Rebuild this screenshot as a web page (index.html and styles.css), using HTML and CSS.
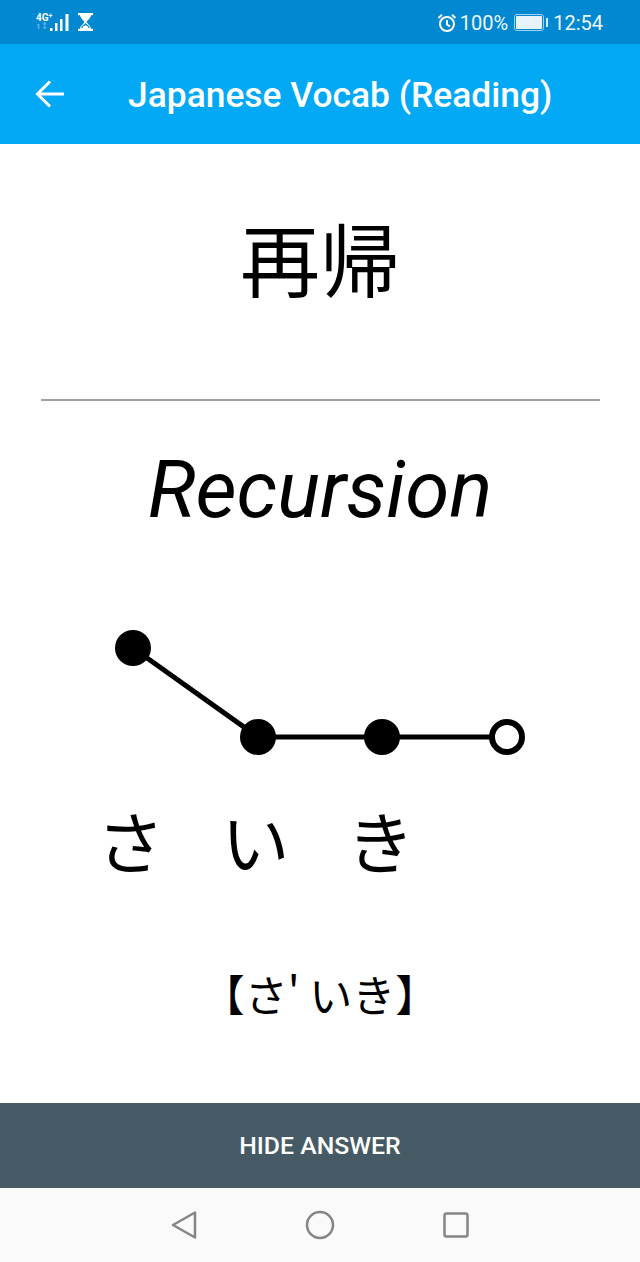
FILE: index.html
```html
<!DOCTYPE html>
<html lang="ja">
<head>
<meta charset="utf-8">
<title>Japanese Vocab (Reading)</title>
<link rel="stylesheet" href="styles.css">
</head>
<body>
<div class="app">
  <div class="status">
    <div class="status-left">
      <div class="net"><span class="net-top">4G<sup>+</sup></span><span class="net-sub">1↕</span></div>
      <svg class="signal" width="19" height="19" viewBox="0 0 19 19"><g fill="#fff"><rect x="0" y="15" width="2.500" height="3"/><rect x="5" y="10" width="2.500" height="8"/><rect x="10" y="6" width="2.500" height="12"/><rect x="15.500" y="1" width="3" height="17"/></g></svg>
      <svg class="hourglass" width="15" height="18" viewBox="0 0 15 18"><g fill="#fff"><rect x="0" y="0" width="15" height="2.200"/><rect x="0" y="15.800" width="15" height="2.200"/><path d="M2 2h11c0 3-3.500 5-4.500 7 1 2 4.500 4 4.500 7H2c0-3 3.500-5 4.500-7C5.500 7 2 5 2 2zM4.500 12.800c-.8.7-1.200 1.300-1.300 1.900h8.600c-.1-.6-.5-1.200-1.300-1.900-1-.9-2-1.800-3-2.800-1 1-2 1.900-3 2.800z" fill-rule="evenodd"/><path d="M5 13.500c1-.7 1.800-1.200 2.500-1.300.7.100 1.500.6 2.500 1.300v1.500H5z"/></g></svg>
    </div>
    <div class="status-right">
      <svg class="alarm" width="20" height="20" viewBox="0 0 20 20" fill="none" stroke="#fff" stroke-width="2"><circle cx="10" cy="11" r="7"/><path d="M10 7v4.500l3 2M1.500 5L5 1.800M18.500 5L15 1.800"/></svg>
      <span class="pct">100%</span>
      <div class="battery"><div class="battery-fill"></div></div>
      <div class="battery-tip"></div>
      <span class="time">12:54</span>
    </div>
  </div>
  <header class="toolbar">
    <svg class="back" width="30" height="28" viewBox="0 0 30 28" fill="none" stroke="#fff" stroke-width="3"><path d="M29 14H3M15 1.500L2.500 14 15 26.500"/></svg>
    <h1 class="title">Japanese Vocab (Reading)</h1>
  </header>
  <main class="card">
    <div class="term">再帰</div>
    <hr class="rule">
    <div class="meaning">Recursion</div>
    <svg class="pitch" width="640" height="146" viewBox="0 0 640 146">
      <path class="pitch-line" d="M133 27L258 116H507"/>
      <circle cx="133" cy="27" r="18"/>
      <circle cx="258" cy="116" r="18"/>
      <circle cx="382" cy="116" r="18"/>
      <circle class="pitch-open" cx="507" cy="116" r="15"/>
    </svg>
    <div class="kana-row"><span>さ</span><span>い</span><span>き</span></div>
    <div class="reading">【さ' いき】</div>
  </main>
  <button class="action">HIDE ANSWER</button>
  <nav class="navbar">
    <svg width="28" height="30" viewBox="0 0 28 30" fill="none" stroke="#858585" stroke-width="2.500" stroke-linejoin="round"><path d="M25 2.500V27.500L3 15z"/></svg>
    <svg width="30" height="30" viewBox="0 0 30 30" fill="none" stroke="#858585" stroke-width="2.500"><circle cx="15" cy="15" r="13"/></svg>
    <svg width="28" height="28" viewBox="0 0 28 28" fill="none" stroke="#858585" stroke-width="2.500"><rect x="2.500" y="2.500" width="23" height="23" rx="2"/></svg>
  </nav>
</div>
</body>
</html>
```
FILE: styles.css
```css
* { box-sizing: border-box; }
html, body { margin: 0; padding: 0; background: #fff; }
.app {
  width: 640px;
  height: 1262px;
  display: flex;
  flex-direction: column;
  overflow: hidden;
  font-family: Roboto, "Noto Sans CJK JP", sans-serif;
}
.status {
  height: 44px;
  background: #0288d1;
  color: #fff;
  display: flex;
  align-items: center;
  justify-content: space-between;
  padding: 0 37px 0 36px;
  flex: none;
}
.status-left, .status-right { display: flex; align-items: center; }
.status-right { padding-top: 1px; }
.net {
  width: 14px;
  display: flex;
  flex-direction: column;
  font-size: 10px;
  line-height: 9px;
  font-weight: 700;
  white-space: nowrap;
}
.net-top sup { font-size: 7px; line-height: 0; vertical-align: 3px; }
.net-sub { opacity: .4; font-size: 8px; }
.hourglass { margin-left: 9px; }
.alarm { margin-right: 3px; }
.pct { font-size: 20px; line-height: 24px; color: #eef6fb; }
.battery {
  width: 30px;
  height: 17px;
  margin-left: 6px;
  border: 1px solid #9fd2ee;
  border-radius: 3px;
  padding: 1px;
}
.battery-fill { width: 100%; height: 100%; background: #e6f3fa; border-radius: 1px; }
.battery-tip { width: 2px; height: 9px; margin-left: 2px; background: #d5eaf6; }
.time { font-size: 20px; line-height: 24px; margin-left: 5px; color: #eef6fb; }
.toolbar {
  height: 100px;
  background: #03a9f4;
  flex: none;
  display: flex;
  align-items: center;
  color: #fff;
  padding-left: 35px;
}
.back { flex: none; }
.title {
  margin: 2px 0 0 63px;
  font-size: 35.400px;
  font-weight: 500;
  line-height: 44px;
  white-space: nowrap;
}
.card {
  flex: 1;
  min-height: 0;
  color: #000;
  display: flex;
  flex-direction: column;
  align-items: center;
}
.term {
  font-family: "Noto Sans CJK JP", sans-serif;
  font-size: 80px;
  line-height: 112px;
  margin-top: 56px;
  height: 112px;
}
.rule {
  width: 559px;
  height: 2px;
  margin: 87px 0 0 1px;
  border: 0;
  background: #a0a0a0;
  flex: none;
}
.meaning {
  font-style: italic;
  font-size: 80px;
  line-height: 94px;
  margin-top: 42px;
}
.pitch { display: block; margin-top: 84px; flex: none; }
.pitch circle { fill: #000; }
.pitch-line { fill: none; stroke: #000; stroke-width: 5; }
.pitch .pitch-open { fill: #fff; stroke: #000; stroke-width: 6; }
.kana-row {
  width: 640px;
  display: flex;
  padding-left: 68px;
  font-family: "Noto Sans CJK JP", sans-serif;
  font-size: 68px;
  line-height: 90px;
  margin-top: 28px;
}
.kana-row span { width: 125px; text-align: center; }
.reading {
  font-family: "Noto Sans CJK JP", sans-serif;
  font-size: 43px;
  line-height: 60px;
  margin-top: 78px;
  white-space: nowrap;
}
.action {
  height: 85px;
  flex: none;
  width: 100%;
  border: 0;
  background: #455a64;
  color: #fff;
  font-family: Roboto, sans-serif;
  font-size: 24.800px;
  font-weight: 500;
  padding: 0;
}
.navbar {
  height: 74px;
  flex: none;
  background: #fafafa;
  display: flex;
  align-items: center;
  justify-content: space-between;
  padding: 0 170px;
}
```
